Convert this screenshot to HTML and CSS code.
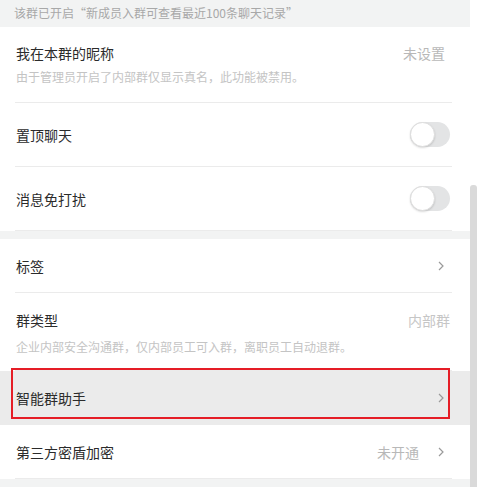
FILE: index.html
```html
<!DOCTYPE html>
<html lang="zh-CN">
<head>
<meta charset="utf-8">
<title>群设置</title>
<link rel="stylesheet" href="styles.css">
</head>
<body>
<div class="page">
  <div class="content">
    <div class="banner">该群已开启“新成员入群可查看最近100条聊天记录”</div>

    <div class="section">
      <div class="row">
        <div class="inner inner-desc first">
          <div class="line">
            <span class="title">我在本群的昵称</span>
            <span class="value value-nick">未设置</span>
          </div>
          <div class="desc desc-nick">由于管理员开启了内部群仅显示真名，此功能被禁用。</div>
        </div>
      </div>
      <div class="row">
        <div class="inner tall">
          <span class="title">置顶聊天</span>
          <span class="switch"><span class="knob"></span></span>
        </div>
      </div>
      <div class="row">
        <div class="inner tall">
          <span class="title">消息免打扰</span>
          <span class="switch"><span class="knob"></span></span>
        </div>
      </div>
    </div>

    <div class="gap"></div>

    <div class="section">
      <div class="row">
        <div class="inner">
          <span class="title">标签</span>
          <span class="chev"><svg width="6" height="10" viewBox="0 0 6 10"><path d="M1 1 L5 5 L1 9" fill="none" stroke="#9a9a9a" stroke-width="1.2"/></svg></span>
        </div>
      </div>
      <div class="row">
        <div class="inner inner-desc second">
          <div class="line">
            <span class="title">群类型</span>
            <span class="value value-type">内部群</span>
          </div>
          <div class="desc desc-type">企业内部安全沟通群，仅内部员工可入群，离职员工自动退群。</div>
        </div>
      </div>
      <div class="row row-active">
        <div class="inner">
          <span class="title">智能群助手</span>
          <span class="chev"><svg width="6" height="10" viewBox="0 0 6 10"><path d="M1 1 L5 5 L1 9" fill="none" stroke="#9a9a9a" stroke-width="1.2"/></svg></span>
        </div>
        <div class="highlight"></div>
      </div>
      <div class="row">
        <div class="inner">
          <span class="title">第三方密盾加密</span>
          <span class="right">
            <span class="value">未开通</span>
            <span class="chev"><svg width="6" height="10" viewBox="0 0 6 10"><path d="M1 1 L5 5 L1 9" fill="none" stroke="#9a9a9a" stroke-width="1.2"/></svg></span>
          </span>
        </div>
      </div>
    </div>
    <div class="gap"></div>
  </div>
  <div class="scrollbar"><div class="thumb"></div></div>
</div>
</body>
</html>
```

FILE: styles.css
```css
* { box-sizing: border-box; }
html, body {
  margin: 0;
  padding: 0;
  background: #ffffff;
  overflow: hidden;
}
body {
  font-family: "Noto Sans CJK SC", "Microsoft YaHei", "Liberation Sans", sans-serif;
  color: #2b2b2b;
  width: 477px;
  height: 487px;
}
.page {
  display: flex;
  width: 477px;
  height: 487px;
}
.content {
  width: 470px;
  flex: none;
  background: #f2f3f3;
}
.banner {
  height: 27px;
  line-height: 25px;
  padding-left: 14px;
  font-size: 12px;
  color: #a8a8a8;
  background: #f2f3f3;
}
.section {
  background: #ffffff;
}
.row {
  position: relative;
  padding: 0 18px 0 15px;
}
.inner {
  height: 54px;
  border-bottom: 1px solid #ebebeb;
  display: flex;
  align-items: center;
  justify-content: space-between;
  padding-left: 1px;
}
.inner.tall {
  height: 64px;
}
.inner-desc {
  height: auto;
  display: block;
}
.inner-desc.first {
  padding-top: 16px;
  padding-bottom: 17px;
}
.inner-desc.second {
  padding-top: 17px;
  padding-bottom: 15px;
}
.line {
  display: flex;
  justify-content: space-between;
  align-items: center;
  height: 20px;
}
.title {
  font-size: 14px;
  line-height: 20px;
  color: #2b2b2b;
}
.value {
  font-size: 14px;
  line-height: 20px;
  color: #b8b8b8;
}
.value-nick {
  margin-right: 7px;
}
.value-type {
  margin-right: 2px;
  color: #c6c6c6;
}
.desc {
  font-size: 12px;
  line-height: 16px;
  color: #c4c4c4;
}
.desc-nick {
  margin-top: 6px;
}
.desc-type {
  margin-top: 9px;
}
.right {
  display: flex;
  align-items: center;
}
.right .value {
  margin-right: 19px;
}
.chev {
  display: flex;
  margin-right: 8px;
}
.switch {
  position: relative;
  width: 40px;
  height: 25px;
  border-radius: 13px;
  background: #e3e4e5;
  margin-right: 2px;
}
.knob {
  position: absolute;
  left: 0;
  top: 0;
  width: 25px;
  height: 25px;
  border-radius: 50%;
  background: #ffffff;
  border: 1px solid #dedede;
  box-shadow: 0 1px 2px rgba(0, 0, 0, 0.15);
}
.row-active {
  background: #ebebeb;
}
.highlight {
  position: absolute;
  left: 11px;
  top: -3px;
  width: 439px;
  height: 51px;
  border: 2px solid #e51d26;
}
.gap {
  height: 8px;
  background: #f2f3f3;
}
.scrollbar {
  position: relative;
  width: 7px;
  flex: none;
  background: #ffffff;
}
.thumb {
  position: absolute;
  left: 0;
  top: 185px;
  width: 7px;
  bottom: 0;
  background: #dadada;
  border-radius: 3px 3px 0 0;
}
```
